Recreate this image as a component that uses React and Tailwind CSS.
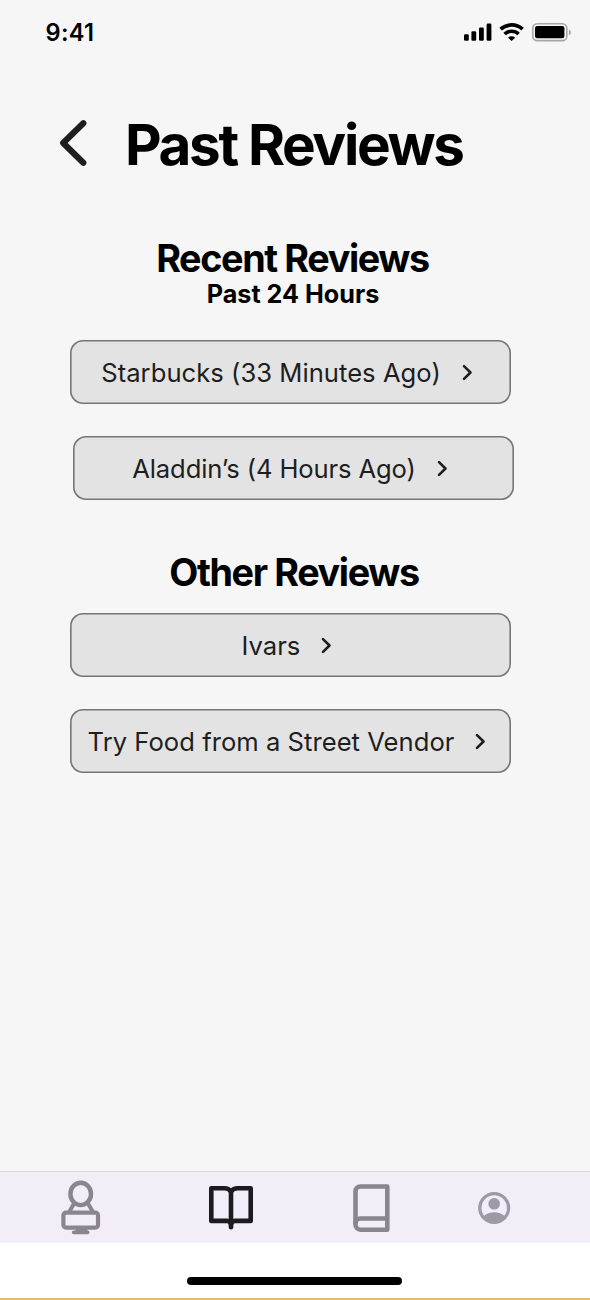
function StatusBar() {
  return (
    <header className="flex h-[60px] items-start justify-between pl-[45.5px] pr-[19px] pt-[18px]">
      <span className="pt-px text-[23.6px] font-semibold leading-7 tracking-[0.3px] text-black">9:41</span>
      <svg className="mt-[4px] h-[20px] w-[108px]" viewBox="463 22 108 20" fill="none">
        <rect x="464" y="34.3" width="4.8" height="6.4" rx="1.3" fill="#000" />
        <rect x="471.4" y="31.2" width="4.8" height="9.5" rx="1.3" fill="#000" />
        <rect x="479" y="27.5" width="4.8" height="13.2" rx="1.3" fill="#000" />
        <rect x="486.6" y="23.6" width="4.8" height="17.1" rx="1.3" fill="#000" />
        <path d="M500.6 29.2a16.4 16.4 0 0 1 22 0" stroke="#000" strokeWidth="3.8" />
        <path d="M504.6 34a10.3 10.3 0 0 1 14 0" stroke="#000" strokeWidth="3.6" />
        <path d="M508 37.7a5.2 5.2 0 0 1 7.2 0l-3.6 3.4z" fill="#000" />
        <rect x="532.8" y="23.8" width="34" height="16.8" rx="4.4" stroke="#a6a6a6" strokeWidth="1.6" />
        <rect x="535" y="26" width="29.4" height="12.2" rx="2.2" fill="#000" />
        <path d="M568.9 29.6v5.6c1.3-.5 2-1.6 2-2.8s-.7-2.3-2-2.8z" fill="#a6a6a6" />
      </svg>
    </header>
  );
}

function ReviewButton({ children, className }) {
  return (
    <button
      className={`flex h-16 w-[441px] items-center justify-center gap-[21px] rounded-[13px] bg-[#e3e3e3] pr-[7px] text-[25.6px] leading-8 text-[#1e1e1e] shadow-[inset_0_0_0_1.6px_#767676] ${className}`}
    >
      <span className="whitespace-nowrap pt-[2px]">{children}</span>
      <svg className="h-[17px] w-[11px] shrink-0" viewBox="0 0 11 17" fill="none">
        <path d="M2 2.1l6.5 6.4L2 14.9" stroke="#1e1e1e" strokeWidth="2.6" strokeLinecap="round" strokeLinejoin="round" />
      </svg>
    </button>
  );
}

function TabBar() {
  return (
    <nav className="flex h-[72px] items-start border-t border-[#dcdadd] bg-[#f3edf7]">
      <svg className="ml-[60px] mt-[8px] h-[56px] w-[42px]" viewBox="60 1180 42 56" fill="none" stroke="#8c858e">
        <ellipse cx="80.7" cy="1193.9" rx="10.3" ry="11.2" strokeWidth="4.4" />
        <path d="M74 1203.5L69.2 1212M88 1203.5L93 1212" strokeWidth="4" />
        <rect x="63.4" y="1212.6" width="34.6" height="15" rx="2.6" strokeWidth="4.2" />
        <path d="M75.5 1229.5h12" strokeWidth="3" />
        <path d="M73.7 1232.4h14" strokeWidth="3.6" strokeLinecap="round" />
      </svg>
      <svg className="ml-[105px] mt-[12px] h-[48px] w-[48px]" viewBox="207 1184 48 48" fill="none" stroke="#1e1b20" strokeLinejoin="round">
        <path d="M231 1191.500c-1.800-2.300-4-3.300-6.300-3.300h-13.400v32.700H227c2 0 4 1.500 4 4 0-2.500 2-4 4-4h15.700v-32.700h-13.400c-2.300 0-4.500 1-6.300 3.300z" strokeWidth="4.6" />
        <path d="M231 1191.500v35.800" strokeWidth="4.6" strokeLinecap="round" />
      </svg>
      <svg className="ml-[96px] mt-[12px] h-[50px] w-[40px]" viewBox="351 1184 40 50" fill="none" stroke="#8c858e" strokeWidth="4.6" strokeLinejoin="round">
        <path d="M387.300 1186.500h-27c-2.700 0-4.800 2.200-4.800 4.900v33.200c0 2.900 2.200 5.100 4.900 5.100h26.900z" />
        <path d="M387 1218.500h-26.700c-2.700 0-4.800 2.300-4.800 5.500" />
      </svg>
      <svg className="ml-[86px] mt-[18px] h-[36px] w-[36px]" viewBox="477 1190 36 36" fill="none">
        <circle cx="494.2" cy="1208" r="14.4" stroke="#9f98a5" strokeWidth="3.3" />
        <circle cx="494.2" cy="1203.8" r="5.8" fill="#9f98a5" />
        <path d="M483.500 1216.200c3-2.600 6.700-4 10.700-4s7.700 1.400 10.700 4c-2.400 4.200-6.200 6.800-10.700 6.800s-8.300-2.600-10.700-6.800z" fill="#9f98a5" />
      </svg>
    </nav>
  );
}

export default function App() {
  return (
    <div className="flex h-[1300px] w-[590px] flex-col overflow-hidden bg-[#f6f6f6] font-['Inter',sans-serif]">
      <StatusBar />
      <main className="flex flex-1 flex-col">
        <div className="mt-[58px] flex h-[54px] items-start">
          <svg className="ml-[58px] h-[50px] w-[32px]" viewBox="58 118 32 50" fill="none">
            <path d="M83.3 123.2L63.2 143l20.1 19.8" stroke="#1e1e1e" strokeWidth="6.2" strokeLinecap="round" strokeLinejoin="round" />
          </svg>
          <h1 className="ml-[35px] whitespace-nowrap text-[56.6px] font-bold leading-[54px] tracking-[-2.35px] text-black">Past Reviews</h1>
        </div>
        <h2 className="mr-[5px] mt-[62px] text-center text-[37.75px] font-bold leading-[48px] tracking-[-1.38px] text-black">Recent Reviews</h2>
        <h3 className="mr-[4px] text-center text-[25.17px] font-bold leading-[24px] text-black">Past 24 Hours</h3>
        <ReviewButton className="ml-[70px] mt-[34px] tracking-[0.03px]">Starbucks (33 Minutes Ago)</ReviewButton>
        <ReviewButton className="ml-[73px] mt-8 tracking-[-0.13px]">Aladdin’s (4 Hours Ago)</ReviewButton>
        <h2 className="mr-[2px] mt-[48px] text-center text-[37.75px] font-bold leading-[48px] tracking-[-1.38px] text-black">Other Reviews</h2>
        <ReviewButton className="ml-[70px] mt-[17px]">Ivars</ReviewButton>
        <ReviewButton className="ml-[70px] mt-8 tracking-[0.03px]">Try Food from a Street Vendor</ReviewButton>
      </main>
      <TabBar />
      <footer className="flex h-[57px] flex-col items-center border-b-2 border-[#e8b878] bg-white pt-[34px]">
        <div className="mr-px h-2 w-[215px] rounded-full bg-black" />
      </footer>
    </div>
  );
}
